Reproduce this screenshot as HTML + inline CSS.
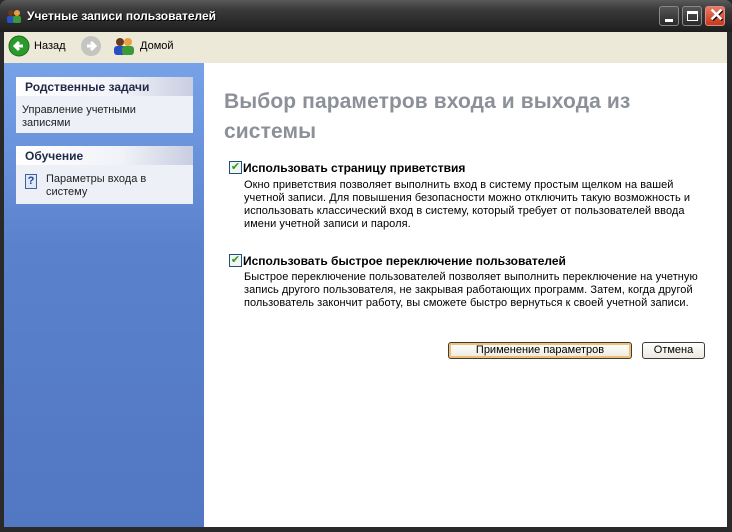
<!DOCTYPE html>
<html><head><meta charset="utf-8"><style>
*{margin:0;padding:0;box-sizing:border-box}
body{width:732px;height:532px;overflow:hidden;background:#2a2a2a;font-family:"Liberation Sans",sans-serif;position:relative}
.title{position:absolute;left:0;top:0;width:732px;height:32px;background:linear-gradient(#5a5a5a,#3a3a3a 30%,#1e1e1e);border-radius:7px 7px 0 0}
.title span{position:absolute;left:27px;top:9px;color:#fff;font-weight:bold;font-size:12px;text-shadow:1px 1px #000}
.tb{position:absolute;top:6px;width:20px;height:20px;border:1px solid #888;border-radius:3px;background:linear-gradient(#555,#2a2a2a)}
.tool{position:absolute;left:4px;top:32px;width:723px;height:31px;background:#ece9d8;font-size:11px}
.left{position:absolute;left:4px;top:63px;width:200px;height:464px;background:linear-gradient(#77a2e8,#5a82cc 40%,#5277c3)}
.main{position:absolute;left:204px;top:63px;width:523px;height:464px;background:#fff}
.box{position:absolute;left:12px;width:177px;background:#eef0f7}
.box .h{height:19px;background:linear-gradient(90deg,#fff,#f1f2f8 60%,#c8cde0);font-weight:bold;font-size:12px;color:#1f2a48;padding:3px 0 0 9px}
.box .b{font-size:11px;color:#222;line-height:13px}
h1{position:absolute;left:20px;top:24px;font-size:21px;color:#8c9099;font-weight:bold;line-height:30px;letter-spacing:.1px}
.cb{position:absolute;width:13px;height:13px;border:1px solid #1c5180;background:#f4f4f0;font-size:11px;line-height:11px;text-align:center;color:#21a121}
.lbl{position:absolute;font-size:12px;font-weight:bold;color:#000}
.d{position:absolute;left:40px;font-size:11px;line-height:13px;color:#000;width:480px;letter-spacing:.05px}
.btn{position:absolute;height:17px;border:1px solid #3c3c3c;border-radius:3px;background:linear-gradient(#fff,#ece9e0);font-size:11px;text-align:center;line-height:15px}
</style></head><body>
<div class="title"><span>Учетные записи пользователей</span>
<svg style="position:absolute;left:6px;top:8px" width="16" height="16"><circle cx="5" cy="5" r="3" fill="#6a3a1a"/><rect x="1" y="8" width="8" height="7" rx="2" fill="#2850c0"/><circle cx="11" cy="5" r="3" fill="#e8a040"/><rect x="7" y="8" width="8" height="7" rx="2" fill="#3a9a3a"/></svg>
<div class="tb" style="left:659px"><div style="position:absolute;left:5px;top:12px;width:8px;height:3px;background:#fff"></div></div>
<div class="tb" style="left:682px"><div style="position:absolute;left:4px;top:4px;width:11px;height:10px;border:1px solid #fff;border-top-width:3px"></div></div>
<div class="tb" style="left:705px;background:linear-gradient(#e87a60,#c8381c);border-color:#d88"><span style="position:absolute;left:3px;top:-2px;color:#fff;font-size:18px;font-weight:bold">✕</span></div>
</div>
<div class="tool">
<svg style="position:absolute;left:4px;top:3px" width="22" height="22"><circle cx="11" cy="11" r="10" fill="#2a9a2a" stroke="#1a6a1a"/><path d="M15 11H7M11 7L7 11L11 15" stroke="#fff" stroke-width="3" fill="none"/></svg>
<span style="position:absolute;left:30px;top:8px">Назад</span>
<svg style="position:absolute;left:76px;top:3px" width="22" height="22"><circle cx="11" cy="11" r="10" fill="#c4c4c0"/><path d="M7 11H15M11 7L15 11L11 15" stroke="#fff" stroke-width="3" fill="none"/></svg>
<svg style="position:absolute;left:108px;top:3px" width="24" height="22"><circle cx="8" cy="7" r="4" fill="#6a3a1a"/><rect x="2" y="11" width="12" height="9" rx="3" fill="#2850c0"/><circle cx="16" cy="7" r="4" fill="#e8a040"/><rect x="10" y="11" width="12" height="9" rx="3" fill="#3a9a3a"/></svg>
<span style="position:absolute;left:136px;top:8px">Домой</span>
</div>
<div class="left">
<div class="box" style="top:14px"><div class="h">Родственные задачи</div><div class="b" style="padding:8px 0 4px 6px;height:37px">Управление учетными<br>записями</div></div>
<div class="box" style="top:83px"><div class="h">Обучение</div><div class="b" style="padding:8px 0 4px 30px;height:39px;position:relative"><div style="position:absolute;left:9px;top:9px;width:12px;height:15px;background:#e0e8f8;border:1px solid #4060a0;color:#2040a0;font-weight:bold;font-size:11px;text-align:center;line-height:13px">?</div>Параметры входа в<br>систему</div></div>
</div>
<div class="main">
<h1>Выбор параметров входа и выхода из<br>системы</h1>
<div class="cb" style="left:25px;top:98px">✔</div>
<div class="lbl" style="left:39px;top:98px">Использовать страницу приветствия</div>
<div class="d" style="top:116px">Окно приветствия позволяет выполнить вход в систему простым щелком на вашей<br>учетной записи. Для повышения безопасности можно отключить такую возможность и<br>использовать классический вход в систему, который требует от пользователей ввода<br>имени учетной записи и пароля.</div>
<div class="cb" style="left:25px;top:191px">✔</div>
<div class="lbl" style="left:39px;top:191px">Использовать быстрое переключение пользователей</div>
<div class="d" style="top:208px">Быстрое переключение пользователей позволяет выполнить переключение на учетную<br>запись другого пользователя, не закрывая работающих программ. Затем, когда другой<br>пользователь закончит работу, вы сможете быстро вернуться к своей учетной записи.</div>
<div class="btn" style="left:244px;top:279px;width:184px;box-shadow:inset 0 0 0 2px #f0c070">Применение параметров</div>
<div class="btn" style="left:438px;top:279px;width:63px">Отмена</div>
</div>
</body></html>
